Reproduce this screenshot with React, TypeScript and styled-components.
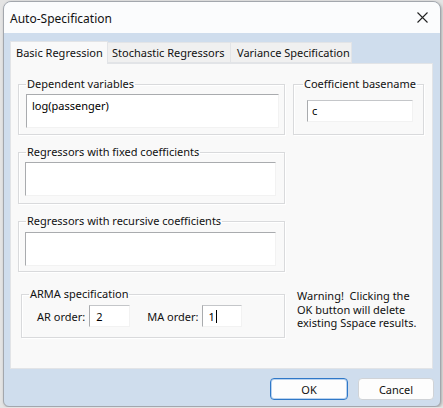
import React from "react";
import styled, { createGlobalStyle } from "styled-components";

const Global = createGlobalStyle`
  html, body { margin: 0; padding: 0; }
  body {
    background: #e4e4e4;
    font-family: "Noto Sans", "Open Sans", sans-serif;
    font-size: 11px;
    color: #1b1b1b;
  }
  * { box-sizing: border-box; }
`;

const Window = styled.div`
  margin: 1px 0 0 3px;
  width: 438px;
  height: 406px;
  border: 1px solid #a3a7ad;
  border-radius: 8px 8px 6px 6px;
  overflow: hidden;
  background: #cfdded;
  display: flex;
  flex-direction: column;
  box-shadow: 1px 1px 3px rgba(0, 0, 0, 0.25);
`;

const TitleBar = styled.div`
  height: 31px;
  flex: none;
  background: #fbfcfd;
  display: flex;
  align-items: center;
  justify-content: space-between;
  padding: 0 6px 0 6px;
`;

const Title = styled.span`
  font-size: 12px;
  color: #111;
  padding-top: 1px;
`;

const CloseBtn = styled.div`
  width: 24px;
  height: 24px;
  display: flex;
  align-items: center;
  justify-content: center;
`;

const Body = styled.div`
  flex: 1;
  display: flex;
  flex-direction: column;
  padding: 8px 7px 0 6px;
`;

const TabRow = styled.div`
  display: flex;
  align-items: flex-end;
  height: 22px;
  position: relative;
  z-index: 1;
`;

const Tab = styled.div<{ $active?: boolean; $first?: boolean; $w: number; $pl: number }>`
  height: ${(p) => (p.$active ? "23px" : "21px")};
  margin-bottom: ${(p) => (p.$active ? "-1px" : "0")};
  width: ${(p) => p.$w}px;
  padding-left: ${(p) => p.$pl}px;
  display: flex;
  align-items: center;
  background: ${(p) => (p.$active ? "#f9f9f9" : "#f0f0f0")};
  border: 1px solid #e2e4e7;
  border-bottom: ${(p) => (p.$active ? "none" : "1px solid #e2e4e7")};
  border-left: ${(p) => (p.$first ? "1px solid #e2e4e7" : "none")};
  font-size: 11px;
  color: #111;
  white-space: nowrap;
  padding-bottom: ${(p) => (p.$active ? "2px" : "0")};
`;

const Panel = styled.div`
  height: 306px;
  background: #f9f9f9;
  border: 1px solid #e2e4e7;
  display: grid;
  grid-template-columns: 267px 131px;
  grid-template-rows: auto auto auto auto;
  column-gap: 8px;
  row-gap: 10px;
  align-content: start;
  padding: 13px 0 0 7px;
`;

const Group = styled.fieldset<{ $pt: number; $pr: number; $pb: number; $pl: number; $ml?: number; $mt?: number }>`
  margin: ${(p) => p.$mt ?? 0}px 0 0 ${(p) => p.$ml ?? 0}px;
  padding: ${(p) => p.$pt}px ${(p) => p.$pr}px ${(p) => p.$pb}px ${(p) => p.$pl}px;
  border: 1px solid #d9dadc;
  box-shadow: inset 1px 1px 0 #ffffff, 1px 1px 0 #ffffff;
  min-width: 0;
  display: flex;
  align-items: center;
`;

const Legend = styled.legend<{ $off: number }>`
  padding: 0 1px;
  margin-left: ${(p) => p.$off}px;
  line-height: 14px;
  font-size: 11px;
  color: #111;
  white-space: nowrap;
  max-width: none;
`;

const TextArea = styled.div`
  flex: 1;
  height: 34px;
  background: #ffffff;
  border-top: 1px solid #a9abae;
  border-left: 1px solid #a9abae;
  border-right: 1px solid #f2f2f2;
  border-bottom: 1px solid #f2f2f2;
  padding: 3px 5px;
  font-size: 11px;
  color: #000;
  line-height: 15px;
`;

const Field = styled.div<{ $w: number; $h: number; $pl: number }>`
  width: ${(p) => p.$w}px;
  height: ${(p) => p.$h}px;
  background: #ffffff;
  border-top: 1px solid #c4c6c9;
  border-left: 1px solid #a9abae;
  border-right: 1px solid #f2f2f2;
  border-bottom: 1px solid #f2f2f2;
  padding-left: ${(p) => p.$pl}px;
  display: flex;
  align-items: center;
  font-size: 11px;
  color: #000;
`;

const Caret = styled.span`
  display: inline-block;
  width: 1px;
  height: 13px;
  background: #000;
  margin-left: 1px;
`;

const Label = styled.span<{ $ml: number }>`
  margin-left: ${(p) => p.$ml}px;
  margin-right: 4px;
  font-size: 11px;
  color: #111;
  white-space: nowrap;
`;

const Warning = styled.div`
  padding: 0 0 0 4px;
  margin-top: 7px;
  font-size: 11px;
  line-height: 13.5px;
  color: #111;
  white-space: nowrap;
  grid-column: 2;
`;

const Footer = styled.div`
  display: flex;
  justify-content: flex-end;
  gap: 10px;
  padding-top: 9px;
  margin-right: -1px;
`;

const Button = styled.div<{ $primary?: boolean; $w: number }>`
  width: ${(p) => p.$w}px;
  height: 22px;
  border-radius: 4px;
  background: #fdfdfd;
  border: 1px solid ${(p) => (p.$primary ? "#2f78c8" : "#d0d3d7")};
  box-shadow: ${(p) => (p.$primary ? "inset 0 0 0 1px #b9d2ee" : "none")};
  display: flex;
  align-items: center;
  justify-content: center;
  font-size: 11px;
  color: #111;
`;

export default function App() {
  return (
    <>
      <Global />
      <Window>
        <TitleBar>
          <Title>Auto-Specification</Title>
          <CloseBtn>
            <svg width="11" height="11" viewBox="0 0 11 11">
              <path d="M0.5 0.5 L10.5 10.5 M10.5 0.5 L0.5 10.5" stroke="#222" strokeWidth="1.1" />
            </svg>
          </CloseBtn>
        </TitleBar>
        <Body>
          <TabRow>
            <Tab $active $first $w={98} $pl={5}>Basic Regression</Tab>
            <Tab $w={123} $pl={4}>Stochastic Regressors</Tab>
            <Tab $w={121} $pl={6}>Variance Specification</Tab>
          </TabRow>
          <Panel>
            <Group $pt={3} $pr={5} $pb={6} $pl={7}>
              <Legend $off={0}>Dependent variables</Legend>
              <TextArea>log(passenger)</TextArea>
            </Group>
            <Group $pt={8} $pr={10} $pb={12} $pl={13}>
              <Legend $off={-4}>Coefficient basename</Legend>
              <Field $w={106} $h={22} $pl={4}>c</Field>
            </Group>
            <Group $pt={3} $pr={8} $pb={7} $pl={6}>
              <Legend $off={1}>Regressors with fixed coefficients</Legend>
              <TextArea />
            </Group>
            <div />
            <Group $pt={4} $pr={8} $pb={5} $pl={6}>
              <Legend $off={1}>Regressors with recursive coefficients</Legend>
              <TextArea />
            </Group>
            <div />
            <Group $pt={4} $pr={0} $pb={10} $pl={15} $ml={3} $mt={5}>
              <Legend $off={-8}>ARMA specification</Legend>
              <Label $ml={0}>AR order:</Label>
              <Field $w={41} $h={22} $pl={6}>2</Field>
              <Label $ml={17}>MA order:</Label>
              <Field $w={40} $h={22} $pl={5}>1<Caret /></Field>
            </Group>
            <Warning>
              Warning!&nbsp; Clicking the
              <br />
              OK button will delete
              <br />
              existing Sspace results.
            </Warning>
          </Panel>
          <Footer>
            <Button $primary $w={78}>OK</Button>
            <Button $w={76}>Cancel</Button>
          </Footer>
        </Body>
      </Window>
    </>
  );
}
